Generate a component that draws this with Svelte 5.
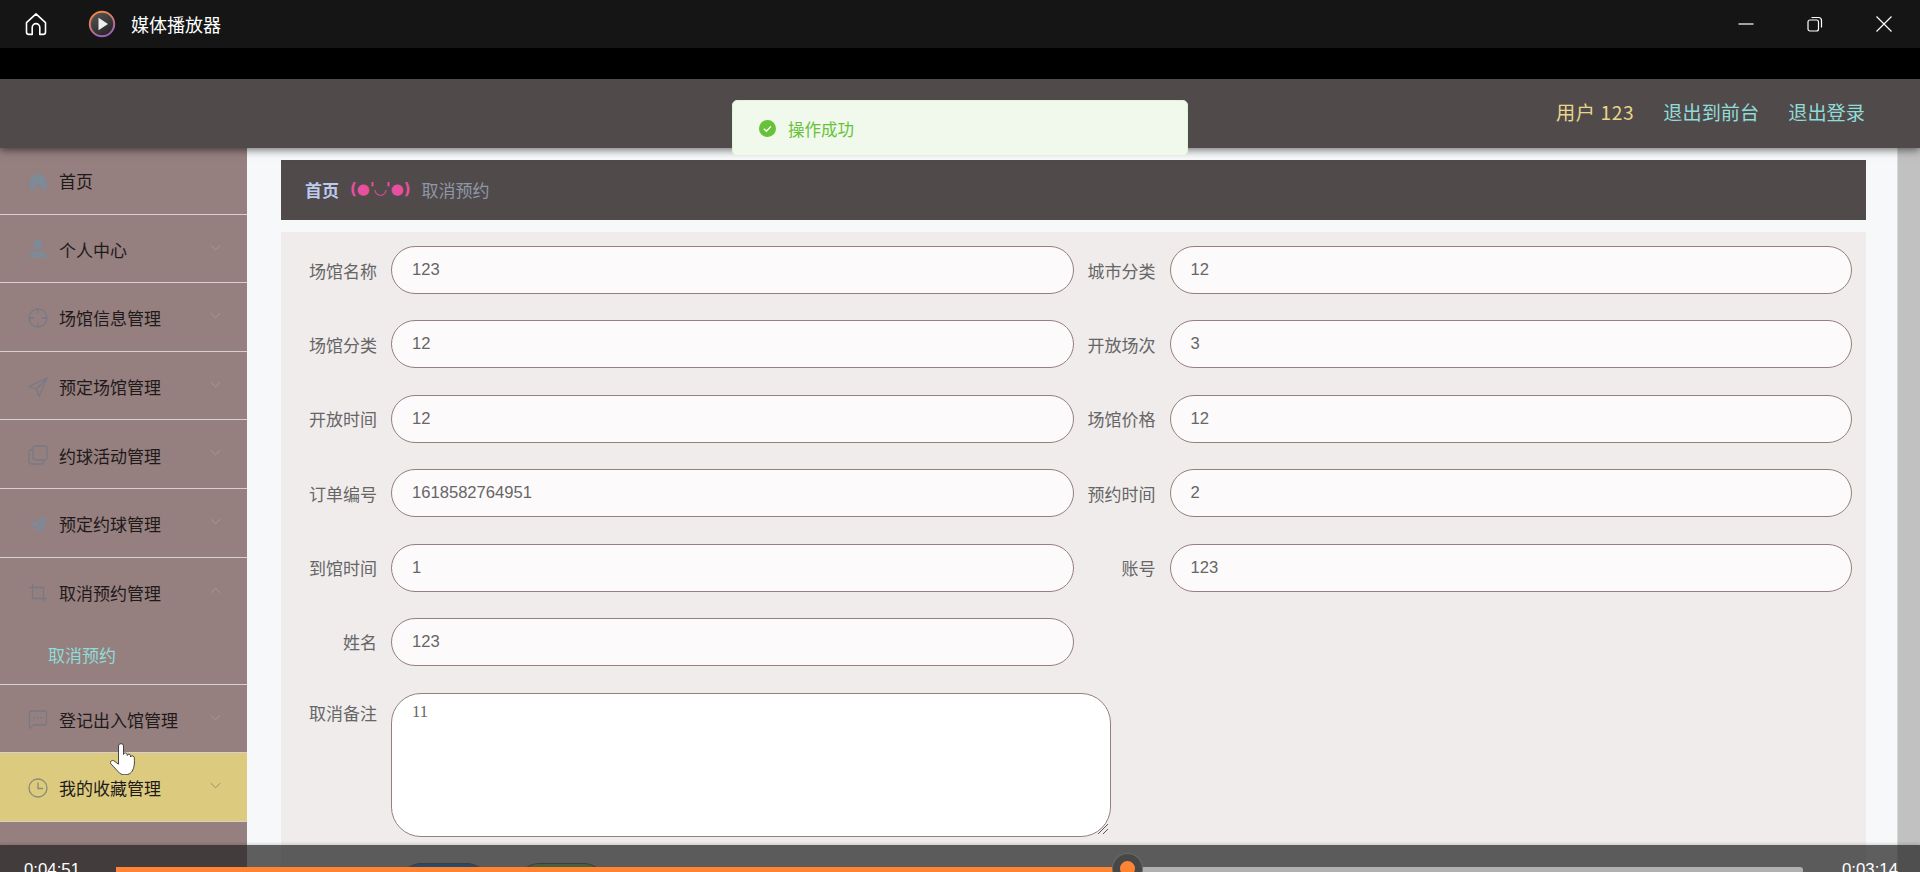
<script>
  const menu = [
    { label: "首页", icon: "home" },
    { label: "个人中心", icon: "user", arrow: true },
    { label: "场馆信息管理", icon: "aim", arrow: true },
    { label: "预定场馆管理", icon: "send", arrow: true },
    { label: "约球活动管理", icon: "copy", arrow: true },
    { label: "预定约球管理", icon: "plane", arrow: true },
    { label: "取消预约管理", icon: "crop", arrow: true, open: true, sub: "取消预约" },
    { label: "登记出入馆管理", icon: "chat", arrow: true },
    { label: "我的收藏管理", icon: "clock", arrow: true, active: true },
  ];

  const rows = [
    ["场馆名称", "123", "城市分类", "12"],
    ["场馆分类", "12", "开放场次", "3"],
    ["开放时间", "12", "场馆价格", "12"],
    ["订单编号", "1618582764951", "预约时间", "2"],
    ["到馆时间", "1", "账号", "123"],
    ["姓名", "123"],
  ];
</script>

<div class="window">
  <div class="titlebar">
    <svg class="home" viewBox="0 0 24 24" width="24" height="24" fill="none" stroke="#fff" stroke-width="1.6" stroke-linejoin="round">
      <path d="M2.5 10.6 12 1.8l9.500 8.800v9.400a2.400 2.400 0 0 1-2.400 2.400h-3.300v-7a3.800 3.800 0 0 0-7.600 0v7H4.900a2.400 2.400 0 0 1-2.400-2.400z" />
    </svg>
    <svg class="logo" viewBox="0 0 28 28" width="28" height="28">
      <defs>
        <linearGradient id="ring" x1="0.3" y1="0" x2="0.7" y2="1">
          <stop offset="0" stop-color="#f58a3c" />
          <stop offset="1" stop-color="#9a5fc0" />
        </linearGradient>
        <linearGradient id="disc" x1="0.2" y1="0" x2="0.8" y2="1">
          <stop offset="0" stop-color="#555" />
          <stop offset="1" stop-color="#222" />
        </linearGradient>
      </defs>
      <circle cx="14" cy="14" r="12.200" fill="url(#disc)" stroke="url(#ring)" stroke-width="2" />
      <path d="M10.500 7.800 20 14l-9.500 6.200z" fill="#eee" />
    </svg>
    <span class="apptitle">媒体播放器</span>
    <div class="winbtns">
      <svg viewBox="0 0 16 16" width="16" height="16" stroke="#fff" fill="none" stroke-width="1.2"><path d="M0.500 8h15" /></svg>
      <svg viewBox="0 0 16 16" width="16" height="16" stroke="#fff" fill="none" stroke-width="1.2"><rect x="1" y="4" width="10.500" height="11" rx="2" /><path d="M4.500 1.500h7a3 3 0 0 1 3 3v7" /></svg>
      <svg viewBox="0 0 16 16" width="16" height="16" stroke="#fff" fill="none" stroke-width="1.2"><path d="m0.500 0.500 15 15M15.500 0.500l-15 15" /></svg>
    </div>
  </div>
  <div class="strip"></div>

  <header class="topbar">
    <span class="user">用户 123</span>
    <span class="link">退出到前台</span>
    <span class="link">退出登录</span>
  </header>

  <div class="body">
    <aside class="sidebar">
      {#each menu as item}
        <div class="item" class:active={item.active} class:open={item.open}>
          <span class="icon" class:solid={["home", "user", "plane"].includes(item.icon)}>
            <svg viewBox="0 0 20 20" width="20" height="20" fill="none" stroke="currentColor" stroke-width="1.300">
              {#if item.icon === "home"}
                <path fill="currentColor" stroke="none" d="M10 1.500 1.500 9v9.500h5.700v-5.300h5.600v5.300h5.700V9z" />
              {:else if item.icon === "user"}
                <circle fill="currentColor" stroke="none" cx="10" cy="5.800" r="4.700" />
                <path fill="currentColor" stroke="none" d="M1.500 18.800v-2.300c0-2.500 2.200-4 4.500-4h8c2.300 0 4.500 1.500 4.500 4v2.300z" />
              {:else if item.icon === "aim"}
                <circle cx="10" cy="10" r="9" />
                <path d="M10 1v5M10 14v5M1 10h5M14 10h5" />
              {:else if item.icon === "send"}
                <path d="M19 1 1 9.500l7.500 2.500 2.500 7.500zM19 1 8.500 12" />
              {:else if item.icon === "copy"}
                <rect x="5" y="1" width="14" height="14" rx="2.500" />
                <path d="M5 4.500H3.500A2.500 2.500 0 0 0 1 7v9.500A2.500 2.500 0 0 0 3.500 19H13a2.500 2.500 0 0 0 2.500-2.500V15" />
              {:else if item.icon === "plane"}
                <path fill="currentColor" stroke="none" d="M18.500 2 1 11l5 2.200L16 5.500 8 14.500v4.300l3.800-3.600 3.500 1.500z" />
              {:else if item.icon === "crop"}
                <path d="M4.500 1v14.500H19M1 4.500h14.500V19" />
              {:else if item.icon === "chat"}
                <path d="M1.500 3.500a1.500 1.500 0 0 1 1.500-1.500h14a1.500 1.500 0 0 1 1.500 1.500v11a1.500 1.500 0 0 1-1.500 1.500H6l-4.500 3.300z" />
                <circle fill="currentColor" stroke="none" cx="6.500" cy="9" r="0.900" />
                <circle fill="currentColor" stroke="none" cx="10" cy="9" r="0.900" />
                <circle fill="currentColor" stroke="none" cx="13.500" cy="9" r="0.900" />
              {:else}
                <circle cx="10" cy="10" r="9" />
                <path d="M10 4.500V10.500h5" />
              {/if}
            </svg>
          </span>
          <span class="label">{item.label}</span>
          {#if item.arrow}
            <svg class="arrow" class:up={item.open} viewBox="0 0 12 7" width="11" height="7" fill="none" stroke="currentColor" stroke-width="1">
              <path d="m1 1 5 5 5-5" />
            </svg>
          {/if}
        </div>
        {#if item.sub}
          <div class="sub">{item.sub}</div>
        {/if}
      {/each}
    </aside>

    <main class="content">
      <div class="crumb">
        <b>首页</b>
        <span class="face">(●'◡'●)</span>
        <span class="here">取消预约</span>
      </div>
      <div class="panel">
        <div class="grid">
          {#each rows as row}
            <div class="field">
              <span class="flabel">{row[0]}</span>
              <div class="input">{row[1]}</div>
            </div>
            {#if row[2]}
              <div class="field">
                <span class="flabel">{row[2]}</span>
                <div class="input">{row[3]}</div>
              </div>
            {:else}
              <div></div>
            {/if}
          {/each}
        </div>
        <div class="notes">
          <span class="flabel top">取消备注</span>
          <div class="textarea">
            11
            <svg class="grip" viewBox="0 0 12 12" width="12" height="12" stroke="#555" stroke-width="1" fill="none"><path d="M11 1 1 11M11 6 6 11" /></svg>
          </div>
        </div>
      </div>
    </main>
    <div class="scrollbar"></div>
  </div>

  <div class="toast">
    <svg viewBox="0 0 16 16" width="17" height="17">
      <circle cx="8" cy="8" r="8" fill="#67c23a" />
      <path d="m4.600 8.200 2.400 2.400 4.200-4.600" fill="none" stroke="#fff" stroke-width="1.300" />
    </svg>
    <span>操作成功</span>
  </div>

  <div class="player">
    <span class="time start">0:04:51</span>
    <span class="time end">0:03:14</span>
    <span class="pill blue"></span>
    <span class="pill green"></span>
    <div class="track">
      <div class="done" style="width: {1128 - 116}px"></div>
    </div>
    <span class="knob"></span>
  </div>

  <svg class="cursor" viewBox="0 0 25 32" width="25" height="32">
    <path fill="#fff" stroke="#222" stroke-width="0.800" stroke-linejoin="round" d="M8.500 3c0-3 5-3 5 0v8.500c.2-2 3.400-2 3.600 0l.1 1c.2-1.800 3.200-1.800 3.400.2v1.300c.2-1.700 3.600-1.500 3.700.8.300 3.700.2 7-.6 9.500-.9 3.800-2.900 7-7.600 7.400-3.900.3-6.300-.8-8.100-3.200L.8 20.700c-1.200-2 1.200-4.300 3.200-2.800l4.500 3.300z" />
  </svg>
</div>

<style>
  :global(body) {
    margin: 0;
    background: #000;
  }
  .window {
    position: relative;
    width: 1920px;
    height: 872px;
    overflow: hidden;
    display: flex;
    flex-direction: column;
    font-family: "Noto Sans CJK SC", "Liberation Sans", sans-serif;
  }
  .titlebar {
    height: 48px;
    flex: none;
    background: #151515;
    display: flex;
    align-items: center;
    color: #fff;
  }
  .home {
    margin-left: 24px;
  }
  .logo {
    margin-left: 40px;
  }
  .apptitle {
    margin-left: 15px;
    font-size: 18px;
    padding-bottom: 1px;
  }
  .winbtns {
    margin-left: auto;
    margin-right: 28px;
    display: flex;
    gap: 53px;
  }
  .strip {
    height: 31px;
    flex: none;
    background: #000;
  }
  .topbar {
    height: 69px;
    flex: none;
    box-sizing: border-box;
    background: #514a4a;
    box-shadow: 0 2px 8px rgba(0, 0, 0, 0.55);
    display: flex;
    align-items: center;
    justify-content: flex-end;
    gap: 29px;
    padding: 0 55px 4px 0;
    font-size: 19.200px;
    position: relative;
    z-index: 2;
  }
  .user {
    color: #e8d68a;
    letter-spacing: 0.600px;
  }
  .link {
    color: #8fdcd8;
  }
  .body {
    flex: 1;
    display: flex;
    min-height: 0;
    background: #f7f8fa;
  }
  .sidebar {
    width: 247px;
    flex: none;
    background: #967f7f;
    margin-top: -2px;
  }
  .item {
    height: 68.600px;
    box-sizing: border-box;
    border-bottom: 1px solid #d9cfcf;
    display: flex;
    align-items: center;
    padding: 2px 0 0 28px;
    color: #1e1a1a;
    font-size: 17px;
    position: relative;
  }
  .item.open {
    border-bottom: 0;
  }
  .item.active {
    background: #dccb7e;
  }
  .icon {
    width: 20px;
    height: 20px;
    color: #777a86;
    margin-right: 11px;
  }
  .icon.solid {
    color: #7d8a98;
  }
  .item.active .icon {
    color: #8a8a78;
  }
  .arrow {
    position: absolute;
    right: 26px;
    top: 29px;
    color: #ad9898;
  }
  .item.active .arrow {
    color: #948a60;
  }
  .arrow.up {
    transform: rotate(180deg);
  }
  .sub {
    height: 58.400px;
    box-sizing: border-box;
    border-bottom: 1px solid #d9cfcf;
    padding-left: 48px;
    font-size: 17px;
    color: #8fdcd8;
    display: flex;
    align-items: center;
  }
  .content {
    flex: 1;
    min-width: 0;
    padding: 12px 31px 0 34px;
  }
  .crumb {
    height: 60px;
    box-sizing: border-box;
    background: #514a4a;
    display: flex;
    align-items: center;
    padding: 0 0 2px 24px;
    font-size: 17px;
  }
  .crumb b {
    color: #bccaee;
    font-weight: 700;
  }
  .face {
    color: #e84f9f;
    margin-left: 11px;
    font-weight: 700;
    font-family: "DejaVu Sans", sans-serif;
    font-size: 15px;
  }
  .here {
    margin-left: 11px;
    color: #8e97a8;
  }
  .panel {
    margin-top: 12px;
    background: #f0ecec;
    padding: 14px 14px 0 16px;
    height: 660px;
    box-sizing: border-box;
  }
  .grid {
    display: grid;
    grid-template-columns: 1fr 1fr;
    column-gap: 2px;
    row-gap: 26.400px;
  }
  .field {
    display: flex;
    align-items: center;
    gap: 14px;
  }
  .flabel {
    width: 80px;
    flex: none;
    text-align: right;
    font-size: 17px;
    color: #666;
  }
  .flabel.top {
    padding-top: 7px;
  }
  .input {
    flex: 1;
    height: 48px;
    box-sizing: border-box;
    border: 1px solid #967f7f;
    border-radius: 24px;
    background: #fdfafb;
    padding: 0 20px;
    display: flex;
    align-items: center;
    font-family: "Liberation Sans", sans-serif;
    font-size: 16.600px;
    color: #666;
  }
  .notes {
    display: flex;
    gap: 14px;
    margin-top: 27px;
    align-items: flex-start;
  }
  .textarea {
    position: relative;
    width: 720px;
    height: 144px;
    box-sizing: border-box;
    border: 1px solid #967f7f;
    border-radius: 30px;
    background: #fff;
    padding: 8px 20px;
    font-family: "Liberation Serif", serif;
    font-size: 16.500px;
    color: #666;
  }
  .grip {
    position: absolute;
    right: 1px;
    bottom: 1px;
  }
  .scrollbar {
    width: 23px;
    flex: none;
    background: #c1c1c1;
    border-left: 1px solid #d8d8d8;
    box-sizing: border-box;
  }
  .toast {
    position: absolute;
    z-index: 3;
    left: 732px;
    top: 100px;
    width: 456px;
    height: 56px;
    box-sizing: border-box;
    border: 1px solid #e1f3d8;
    border-radius: 5px;
    background: #f0f9eb;
    display: flex;
    align-items: center;
    gap: 12px;
    padding: 1px 0 0 26px;
    color: #67c23a;
    font-size: 16.500px;
  }
  .player {
    position: absolute;
    z-index: 4;
    left: 0;
    right: 0;
    bottom: 0;
    height: 27px;
    background: rgba(35, 35, 35, 0.72);
    box-shadow: 0 -2px 2px rgba(0, 0, 0, 0.1);
  }
  .time {
    position: absolute;
    top: 15px;
    color: #fff;
    font-family: "Liberation Sans", sans-serif;
    font-size: 16.800px;
  }
  .time.start {
    left: 24px;
  }
  .time.end {
    left: 1842px;
  }
  .pill {
    position: absolute;
    top: 18px;
    height: 30px;
    box-sizing: border-box;
    border-radius: 20px 20px 0 0;
    border-top: 1px solid #3d3d3d;
  }
  .pill.blue {
    left: 401px;
    width: 86px;
    background: #2a4a6b;
  }
  .pill.green {
    left: 519px;
    width: 85px;
    background: #48603f;
  }
  .track {
    position: absolute;
    left: 116px;
    top: 22px;
    width: 1687px;
    height: 6px;
    background: #b0b0b0;
    border-radius: 3px 3px 0 0;
  }
  .done {
    height: 100%;
    background: #ff8534;
  }
  .knob {
    position: absolute;
    left: 1121px;
    top: 17px;
    width: 15px;
    height: 15px;
    border-radius: 50%;
    background: #ff8534;
    border: 7.500px solid #474747;
    box-shadow: 0 0 0 1px #6a6a6a;
    box-sizing: content-box;
    margin: -8px;
  }
  .cursor {
    position: absolute;
    z-index: 5;
    left: 110px;
    top: 743px;
  }
</style>
